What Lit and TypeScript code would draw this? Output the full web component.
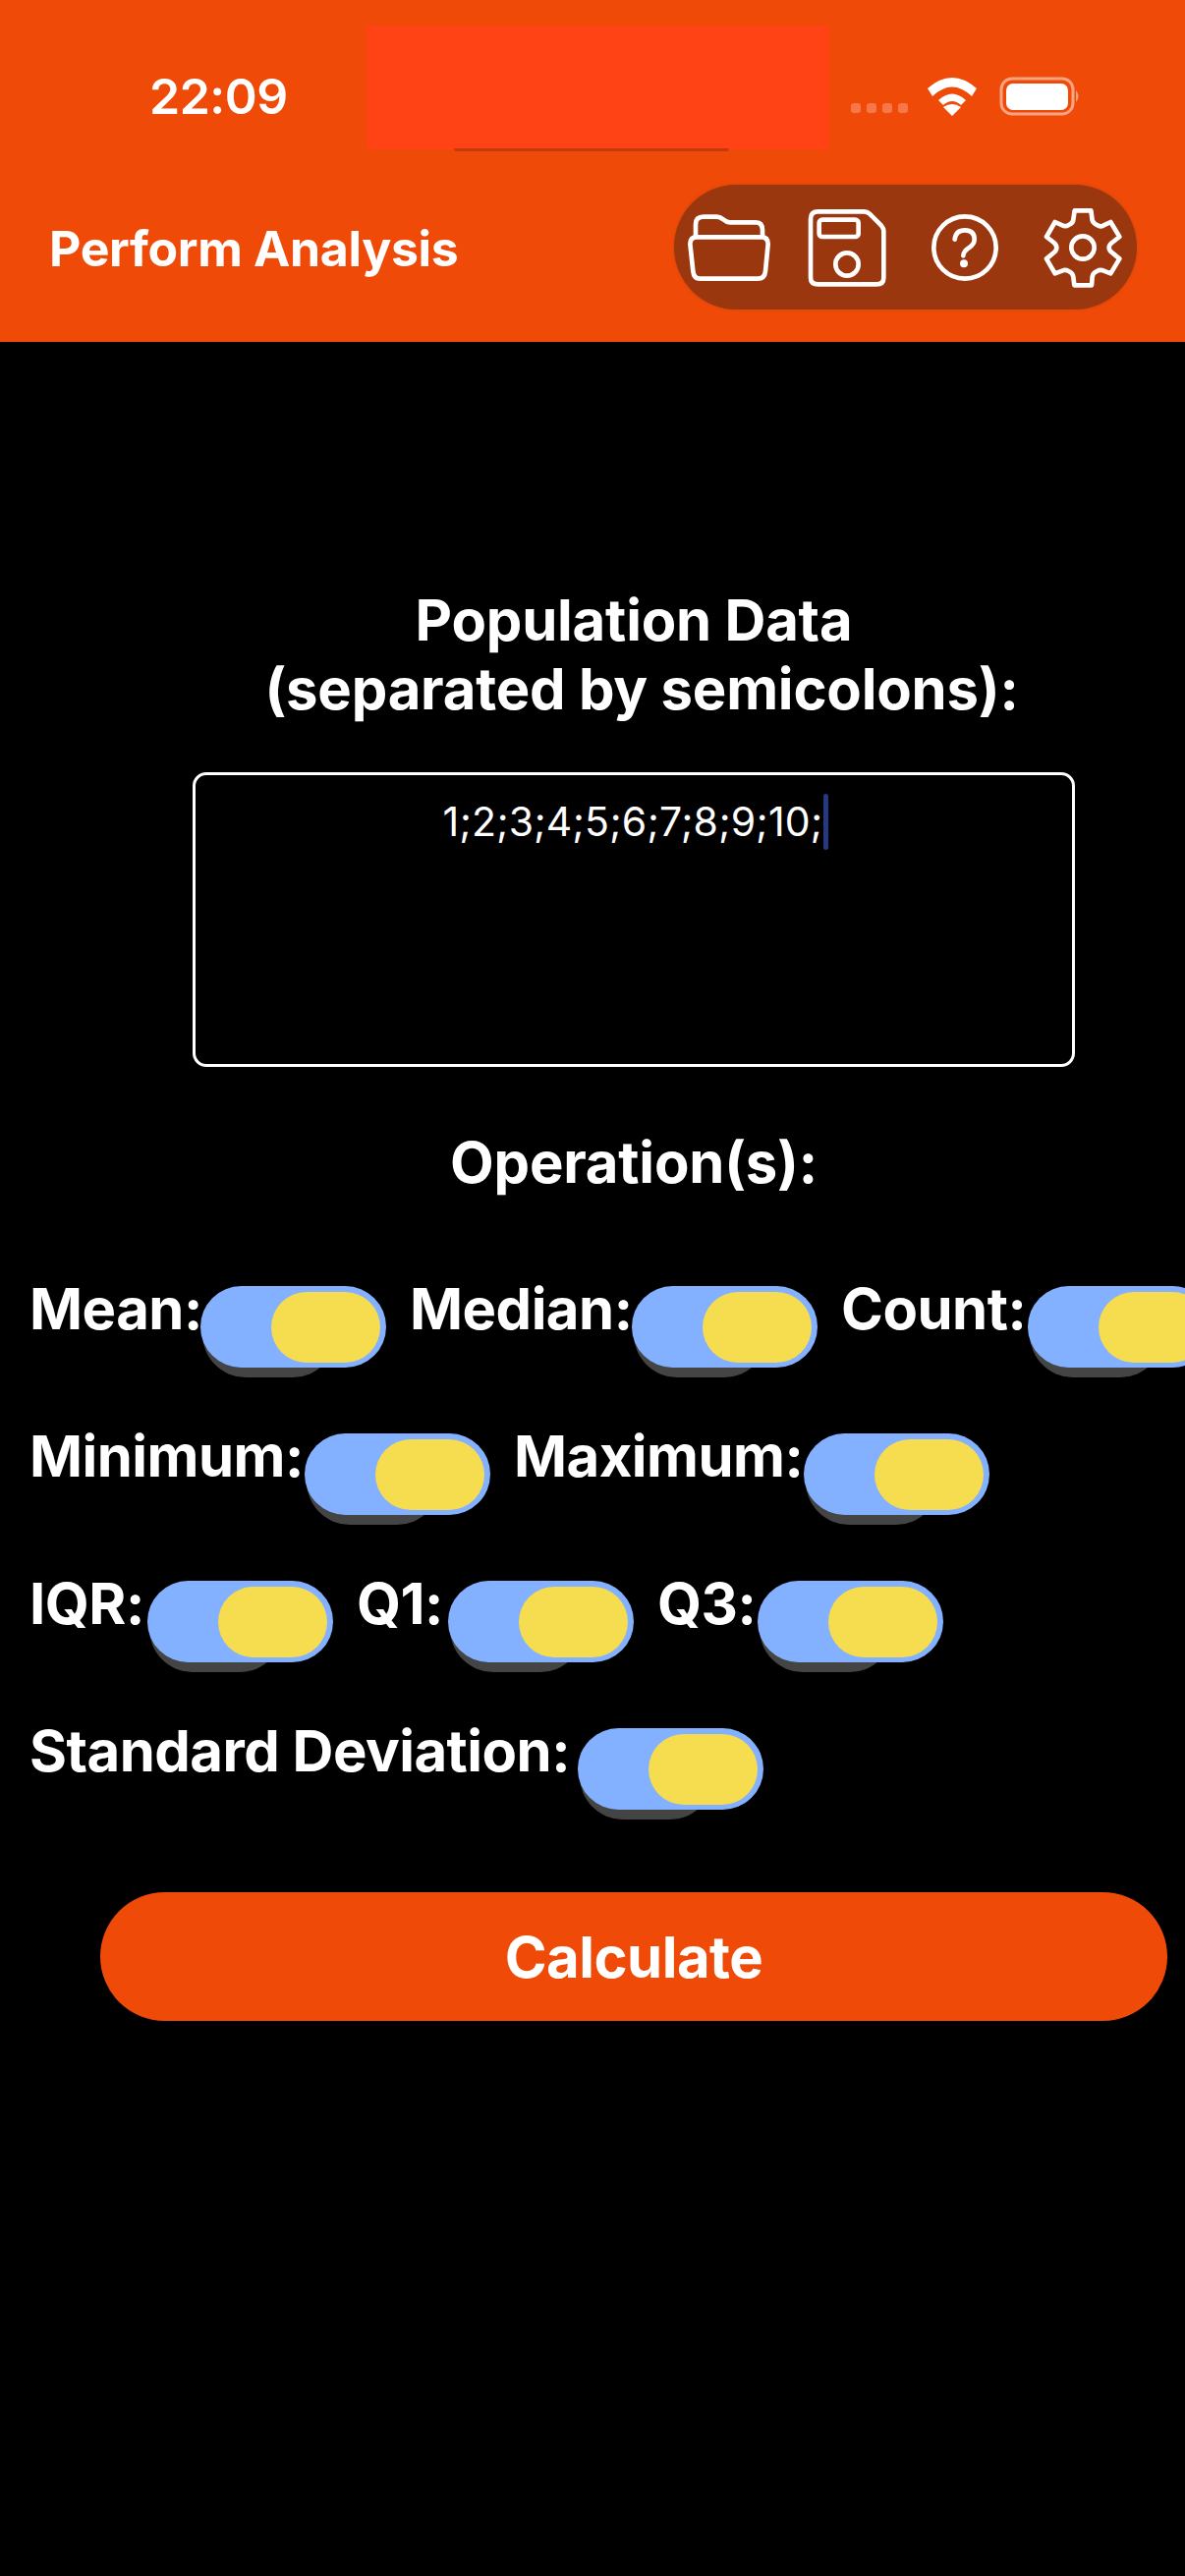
import { LitElement, html, css, svg } from "lit";
import { customElement } from "lit/decorators.js";

const rows: [string, number][][] = [
  [["Mean:", 174], ["Median:", 226], ["Count:", 190]],
  [["Minimum:", 280], ["Maximum:", 295]],
  [["IQR:", 120], ["Q1:", 93], ["Q3:", 102]],
  [["Standard Deviation:", 558]],
];

@customElement("app-root")
export class AppRoot extends LitElement {
  static styles = css`
    :host { display: block; width: 1206px; height: 2622px; background: #000; overflow: hidden; font-family: Inter, "Liberation Sans", sans-serif; color: #fff; }
    .header { position: relative; height: 348px; background: #ef4a08; box-sizing: border-box; }
    .status { height: 188px; display: flex; align-items: flex-start; box-sizing: border-box; padding: 0 0 0 152px; }
    .time { font-size: 50px; font-weight: 600; line-height: 60px; margin-top: 68px; width: 714px; letter-spacing: -0.5px; }
    .dots { display: flex; gap: 6px; margin-top: 105px; width: 77px; }
    .dots i { width: 10px; height: 10px; border-radius: 3px; background: #f7764a; }
    .wifi { margin-top: 78px; width: 52px; height: 40px; }
    .batt { margin: 78px 0 0 22px; width: 84px; height: 40px; }
    .redact { position: absolute; left: 373px; top: 26px; width: 471px; height: 126px; background: #ff4314; }
    .notch { position: absolute; left: 462px; top: 151px; width: 280px; height: 3px; border-radius: 0 0 40px 40px; background: #c33a0e; }
    .bar { display: flex; align-items: flex-start; justify-content: space-between; padding: 0 49px 0 50px; }
    .title { font-size: 50px; font-weight: 700; line-height: 58px; margin-top: 36px; letter-spacing: -0.35px; }
    .pill { width: 471px; height: 127px; border-radius: 64px; background: #9a370e; box-shadow: 0 0 3px #c8450d; display: flex; align-items: center; justify-content: center; gap: 16px; }
    .pill svg { width: 104px; height: 100px; fill: none; stroke: #fff; stroke-width: 14; stroke-linecap: round; stroke-linejoin: round; }
    .main { padding: 248px 0 0 84px; display: flex; flex-direction: column; align-items: center; }
    .head { font-size: 58px; font-weight: 700; line-height: 70px; text-align: center; margin: 0; letter-spacing: -0.2px; }
    .line2 { display: block; margin-left: 16px; }
    .box { width: 898px; height: 300px; box-sizing: border-box; margin-top: 50px; border: 3px solid #fff; border-radius: 14px; display: flex; justify-content: center; align-items: flex-start; padding: 19px 0 0 4px; font-size: 41px; line-height: 56px; letter-spacing: 0.2px; }
    .caret { display: inline-block; width: 5px; height: 57px; background: #24397f; border-radius: 3px; margin-left: 1px; }
    .ops { margin-top: 62px; }
    .rows { padding: 91px 0 0 30px; display: flex; flex-direction: column; gap: 67px; }
    .row { display: flex; gap: 24px; white-space: nowrap; }
    .item { display: flex; align-items: flex-start; font-size: 58px; font-weight: 700; line-height: 70px; letter-spacing: -0.5px; }
    .item span { margin-top: -12px; flex: none; }
    .toggle { position: relative; width: 189px; height: 83px; border-radius: 42px; background: #84b1ff; flex: none; }
    .toggle::before { content: ""; position: absolute; z-index: -1; left: 2px; top: 5px; width: 136px; height: 88px; border-radius: 44px; background: #444; }
    .toggle::after { content: ""; position: absolute; right: 6px; top: 6px; width: 111px; height: 72px; border-radius: 36px; background: #f6dc4f; }
    .rowsWrap { position: relative; z-index: 0; }
    .btn { width: 1086px; height: 131px; border-radius: 66px; background: #ef4a08; display: flex; align-items: center; justify-content: center; font-size: 58px; font-weight: 700; letter-spacing: -0.5px; margin: 84px 0 0 102px; }
  `;

  render() {
    return html`
      <div class="header">
        <div class="status">
          <div class="time">22:09</div>
          <div class="dots"><i></i><i></i><i></i><i></i></div>
          <svg class="wifi" viewBox="0 0 52 40"><path fill="#fff" d="M1 12 Q26 -10 51 12 L46 20 Q26 1 6 20 Z M12 24 Q26 11 40 24 L35 29 Q26 21 17 29 Z M17 31 Q26 25 35 31 L26 40 Z"/></svg>
          <svg class="batt" viewBox="0 0 84 40"><rect x="2" y="2" width="73" height="36" rx="11" fill="none" stroke="#f9a483" stroke-width="3"/><rect x="7" y="7" width="63" height="27" rx="7" fill="#fff"/><path d="M78 14 Q83 20 78 26 Z" fill="#f9a483"/></svg>
        </div>
        <div class="bar">
          <div class="title">Perform Analysis</div>
          <div class="pill">
            <svg viewBox="87 93 312 300">
              <path d="M141 208 V172 Q141 149 165 149 H205 Q215 149 225 157 Q235 166 245 166 H325 Q345 166 345 190 V208"/>
              <path d="M124 232 Q124 211 144 211 H342 Q362 211 362 232 L354 315 Q352 338 330 338 H155 Q135 338 133 315 Z"/>
            </svg>
            <svg viewBox="447 93 312 300">
              <path d="M492 155 Q492 133 515 133 H655 Q665 133 672 140 L708 176 Q715 184 715 192 V335 Q715 355 693 355 H515 Q492 355 492 335 Z"/>
              <rect x="518" y="158" width="120" height="52" rx="10"/>
              <circle cx="603" cy="294" r="35"/>
            </svg>
            <svg viewBox="807 93 312 300">
              <circle cx="963" cy="243" r="95"/>
              <path d="M932 218 Q935 190 963 190 Q992 190 992 218 Q992 232 975 244 Q958 255 958 268"/>
              ${svg`<circle cx="960" cy="292" r="5" fill="#fff" />`}
            </svg>
            <svg viewBox="1167 93 312 300">
              <circle cx="1323" cy="243" r="35"/>
              <path d="M1298 130 H1348 L1352 160 Q1356 170 1370 176 Q1378 180 1385 176 L1408 165 L1435 210 L1412 228 Q1403 235 1403 243 Q1403 252 1412 258 L1435 277 L1408 322 L1385 313 Q1375 310 1366 315 Q1352 322 1352 332 L1350 358 H1297 L1294 332 Q1293 322 1280 315 Q1270 310 1262 313 L1238 322 L1212 277 L1235 258 Q1243 252 1243 243 Q1243 235 1235 228 L1212 210 L1238 165 L1262 176 Q1270 180 1280 174 Q1293 168 1294 158 Z"/>
            </svg>
          </div>
        </div>
        <div class="redact"></div>
        <div class="notch"></div>
      </div>
      <div class="main">
        <h2 class="head">Population Data<span class="line2">(separated by semicolons):</span></h2>
        <div class="box"><span>1;2;3;4;5;6;7;8;9;10;</span><i class="caret"></i></div>
        <h2 class="head ops">Operation(s):</h2>
      </div>
      <div class="rowsWrap">
        <div class="rows">
          ${rows.map(
            (r) => html`<div class="row">
              ${r.map(([l, w]) => html`<div class="item"><span style="width:${w}px">${l}</span><div class="toggle"></div></div>`)}
            </div>`
          )}
        </div>
      </div>
      <div class="btn">Calculate</div>
    `;
  }
}
